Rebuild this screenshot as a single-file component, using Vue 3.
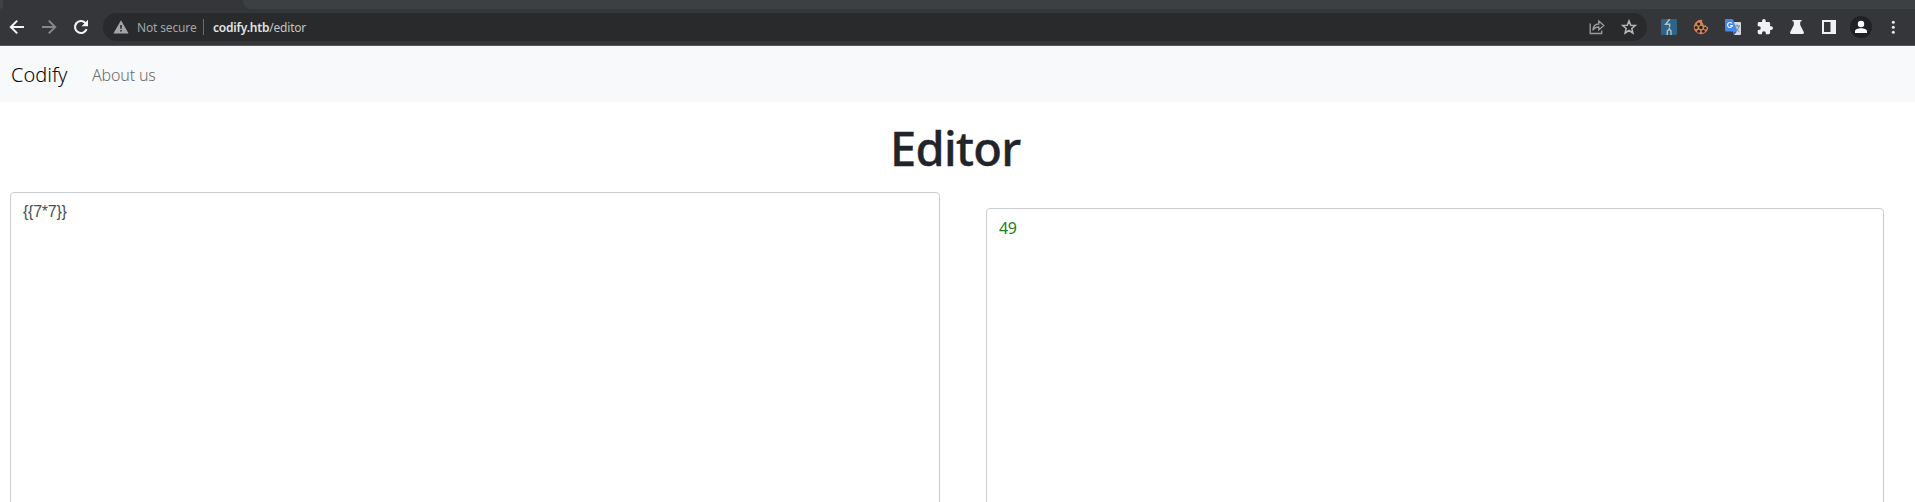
<script setup>
const code = '{{7*7}}'
const result = '49'
</script>

<template>
  <div class="window">
    <header class="chrome">
      <div class="tabstrip"><div class="tab-prev"></div><div class="tab-active"></div><div class="tab-rest"></div></div>
      <div class="toolbar">
        <div class="nav-buttons">
          <span class="cell"><svg viewBox="0 0 16 16" width="16" height="16" fill="none" stroke="#f4f5f6" stroke-width="2"><path d="M15 8H2.500M8.200 1.600L1.800 8l6.400 6.400" /></svg></span>
          <span class="cell"><svg viewBox="0 0 16 16" width="16" height="16" fill="none" stroke="#85878a" stroke-width="2"><path d="M1 8h12.500M7.800 1.600L14.200 8l-6.400 6.400" /></svg></span>
          <span class="cell"><svg viewBox="0 0 16 16" width="16" height="16"><path d="M13.600 10.200A6 6 0 1 1 12.400 3.900L14 5.500" fill="none" stroke="#f4f5f6" stroke-width="2.100" /><path d="M15 .8v6.400H8.600z" fill="#f4f5f6" /></svg></span>
        </div>
        <div class="omnibox">
          <svg class="warn" viewBox="0 0 16 14" width="16" height="14"><path fill-rule="evenodd" d="M8 .3L15.600 13.400H.4zM7.200 5v3.700h1.600V5zm0 5v1.600h1.600V10z" fill="#a1a4a8" /></svg>
          <span class="secure">Not secure</span>
          <span class="divider"></span>
          <span class="url"><b>codify.htb</b><span class="path">/editor</span></span>
          <span class="cell share"><svg viewBox="0 0 16 16" width="16" height="16" fill="none" stroke="#9b9da0" stroke-width="1.300"><path d="M1.200 4.500v10h11.500v-3M3.800 11.300C4.200 7 6.500 5 9.800 5V2l5 4.500-5 4.400V8C7 8 5 9 3.800 11.300z" /></svg></span>
          <span class="cell"><svg viewBox="0 0 16 16" width="16" height="16" fill="none" stroke="#b5b7b9" stroke-width="1.500"><path d="M8 1.900l1.700 4.300 4.600.3-3.500 3 1.100 4.500L8 11.500 4.100 14l1.100-4.500-3.500-3 4.600-.3z" /></svg></span>
        </div>
        <div class="extensions">
          <span class="cell"><svg viewBox="0 0 16 16" width="16" height="16"><rect width="16" height="16" rx="1.200" fill="#2d6487" /><path d="M8.800 0L4.600 5.200h4.100V8M8.300 8.500v2M8 10.300L6.300 12v4M8.500 10.300L10 12v4" fill="none" stroke="#b8c2c6" stroke-width="1.400" /></svg></span>
          <span class="cell"><svg viewBox="0 0 16 16" width="16" height="16"><path d="M9.500 1A7.200 7.200 0 1 0 15.200 8c-1.300.3-2.200-.4-2.300-1.700-1.700.5-2.900-.4-2.700-2C8.800 3.900 8.700 2 9.500 1z" fill="#d48257" /><g fill="#2b2421"><circle cx="5.700" cy="5" r="1.600" /><circle cx="3.100" cy="8.600" r="1.500" /><circle cx="8" cy="8.500" r="1.700" /><circle cx="5.700" cy="12.200" r="1.500" /><circle cx="10.300" cy="12.300" r="1.500" /><circle cx="12.300" cy="9.200" r="1.300" /></g></svg></span>
          <span class="cell"><svg viewBox="0 0 16 16" width="16" height="16"><path d="M6 3h9q1 0 1 1v11q0 1-1 1H9z" fill="#d5dade" /><path d="M9.500 7h5.500M12 5.500V7M14 7c-.5 2.500-2 4.500-4 5.500M10.500 8c.8 2 2.300 3.700 4 4.800" fill="none" stroke="#718395" stroke-width="1" /><path d="M1 0h7l4 12.500H1q-1 0-1-1V1q0-1 1-1z" fill="#4787e8" /><path d="M8 12.500h4L9 16z" fill="#3060b7" /><path d="M7 4.500A2.500 2.500 0 1 0 7.400 6.700H5.200" fill="none" stroke="#eef4ff" stroke-width="1.200" /></svg></span>
          <span class="cell"><svg viewBox="1.500 1 21 22" width="16" height="16"><path fill="#f0f1f2" d="M20.500 11H19V7a2 2 0 0 0-2-2h-4V3.500a2.500 2.500 0 0 0-5 0V5H4a2 2 0 0 0-2 2v3.800h1.500a2.700 2.700 0 0 1 0 5.400H2V20a2 2 0 0 0 2 2h3.800v-1.500a2.700 2.700 0 0 1 5.400 0V22H17a2 2 0 0 0 2-2v-4h1.500a2.500 2.500 0 0 0 0-5z" /></svg></span>
          <span class="cell"><svg viewBox="0 0 16 16" width="16" height="16"><path fill="#f0f1f2" d="M3.500 1h9v1.600h-1.300v3.300l3.700 7.400Q15.300 15 13.700 15H2.300Q.7 15 1.100 13.300l3.700-7.400V2.600H3.500z" /></svg></span>
          <span class="cell"><svg viewBox="0 0 16 16" width="16" height="16"><path fill-rule="evenodd" fill="#f0f1f2" d="M1 1h14v14H1zM3 3v10h6.500V3z" /></svg></span>
          <span class="cell"><span class="avatar"><svg viewBox="0 0 16 16" width="16" height="16"><circle cx="8" cy="5" r="3.200" fill="#fff" /><path d="M2 14v-1.600C2 10 5 9.200 8 9.200s6 .8 6 3.200V14z" fill="#fff" /></svg></span></span>
          <span class="cell"><svg viewBox="0 0 16 16" width="16" height="16" fill="#e8e9ea"><circle cx="8.300" cy="3.300" r="1.500" /><circle cx="8.300" cy="8.300" r="1.500" /><circle cx="8.300" cy="13.300" r="1.500" /></svg></span>
        </div>
      </div>
    </header>
    <nav class="navbar">
      <a class="brand">Codify</a>
      <a class="link">About us</a>
    </nav>
    <main>
      <h1><span class="title">Editor</span></h1>
      <div class="panes">
        <div class="pane input"><span class="code">{{ code }}</span></div>
        <div class="pane output"><span class="result">{{ result }}</span></div>
      </div>
    </main>
  </div>
</template>

<style>
body { margin: 0; overflow: hidden; }
</style>

<style scoped>
.window { height: 502px; overflow: hidden; display: flex; flex-direction: column; background: #fff; font-family: "Noto Sans", "Open Sans", sans-serif; }
.chrome { flex: none; height: 46px; box-sizing: border-box; background: #35363a; border-bottom: 1px solid #55575a; }
.tabstrip { height: 9px; display: flex; background: #35363a; }
.tab-prev { width: 3px; background: #3f4246; border-bottom-right-radius: 5px; }
.tab-active { width: 240px; }
.tab-rest { flex: 1; background: #3d4043; border-bottom-left-radius: 8px; }
.toolbar { height: 36px; display: flex; align-items: center; }
.nav-buttons { display: flex; width: 103px; padding-left: 1px; box-sizing: border-box; }
.cell { flex: none; width: 32px; height: 28px; display: flex; align-items: center; justify-content: center; }
.cell svg { display: block; }
.omnibox { width: 1544px; height: 28px; box-sizing: border-box; padding: 0 2px 0 10px; border-radius: 14px; background: #292a2b; display: flex; align-items: center; font-size: 12px; white-space: nowrap; }
.warn { flex: none; }
.secure { width: 66px; margin-left: 8px; color: #a2a5a8; letter-spacing: -.15px; }
.divider { width: 1px; height: 16px; background: #696b6e; }
.url { margin-left: 9px; color: #e3e4e5; letter-spacing: -.2px; }
.url b { font-weight: 600; }
.path { color: #c3c5c7; }
.share { margin-left: auto; }
.extensions { display: flex; margin-left: 6px; }
.avatar { width: 22px; height: 22px; border-radius: 50%; background: #202124; display: flex; align-items: center; justify-content: center; }
.navbar { flex: none; height: 56px; box-sizing: border-box; padding: 2px 0 0 11px; background: #f8f9fb; display: flex; align-items: center; }
.brand { width: 81px; font-size: 20px; font-weight: 300; line-height: 30px; color: #08090b; }
.link { font-size: 16px; font-weight: 300; line-height: 24px; color: #686b6e; letter-spacing: -.15px; }
main { flex: 1; min-height: 0; }
h1 { margin: 0; padding-left: 890px; height: 90px; box-sizing: border-box; padding-top: 14px; font-size: 47px; font-weight: 500; line-height: 64px; color: #212529; -webkit-text-stroke: .4px #212529; }
.title { letter-spacing: -.7px; }
.panes { display: flex; align-items: flex-start; gap: 46px; padding-left: 10px; }
.pane { height: 400px; box-sizing: border-box; border: 1px solid #cacccf; border-radius: 4px; padding: 7px 12px; font-size: 16px; line-height: 24px; }
.input { width: 930px; color: #495057; font-family: "Liberation Sans", sans-serif; }
.code { letter-spacing: -.25px; }
.output { width: 898px; margin-top: 16px; color: #1c7c27; }
.result { letter-spacing: -.3px; }
</style>
